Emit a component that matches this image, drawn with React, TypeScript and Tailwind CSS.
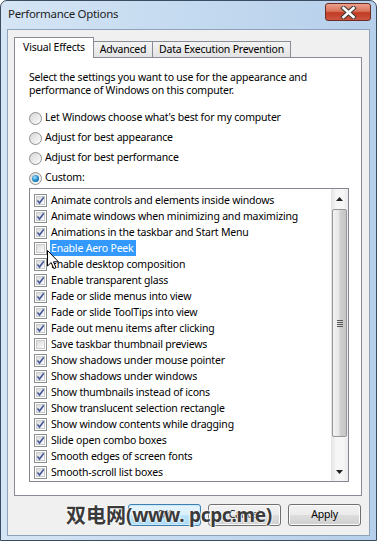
import React from 'react';

const items: { label: string; checked: boolean; selected?: boolean }[] = [
  { label: 'Animate controls and elements inside windows', checked: true },
  { label: 'Animate windows when minimizing and maximizing', checked: true },
  { label: 'Animations in the taskbar and Start Menu', checked: true },
  { label: 'Enable Aero Peek', checked: false, selected: true },
  { label: 'Enable desktop composition', checked: true },
  { label: 'Enable transparent glass', checked: true },
  { label: 'Fade or slide menus into view', checked: true },
  { label: 'Fade or slide ToolTips into view', checked: true },
  { label: 'Fade out menu items after clicking', checked: true },
  { label: 'Save taskbar thumbnail previews', checked: false },
  { label: 'Show shadows under mouse pointer', checked: true },
  { label: 'Show shadows under windows', checked: true },
  { label: 'Show thumbnails instead of icons', checked: true },
  { label: 'Show translucent selection rectangle', checked: true },
  { label: 'Show window contents while dragging', checked: true },
  { label: 'Slide open combo boxes', checked: true },
  { label: 'Smooth edges of screen fonts', checked: true },
  { label: 'Smooth-scroll list boxes', checked: true },
];

const radios = [
  { label: "Let Windows choose what's best for my computer", on: false },
  { label: 'Adjust for best appearance', on: false },
  { label: 'Adjust for best performance', on: false },
  { label: 'Custom:', on: true },
];

const Checkbox: React.FC<{ checked: boolean }> = ({ checked }) => (
  <span className="w-[13px] h-[13px] shrink-0 border border-[#8e8f8f] bg-white p-[1px]">
    <span className="relative block w-full h-full border border-[#c9cbcd] bg-gradient-to-br from-[#dcdcdc] to-[#fbfbfb]">
      {checked && (
        <svg className="absolute -left-[1px] -top-[1px]" width="9" height="9" viewBox="0 0 9 9">
          <path d="M1.5 4.5 L3.5 7 L7.8 1.2" fill="none" stroke="#4a5f97" strokeWidth="1.7" />
        </svg>
      )}
    </span>
  </span>
);

const Radio: React.FC<{ on: boolean }> = ({ on }) => (
  <span className="w-[13px] h-[13px] shrink-0 rounded-full border border-[#8e8f8f] bg-gradient-to-br from-[#d6d6d6] to-[#fdfdfd] flex items-center justify-center">
    {on && <span className="w-[7px] h-[7px] rounded-full bg-[radial-gradient(circle_at_40%_35%,#9fe3ff,#1b84c4_55%,#0d5b8f)]" />}
  </span>
);

const Button: React.FC<{ label: string; primary?: boolean }> = ({ label, primary }) => (
  <div
    className={
      'w-[73px] h-[22px] rounded-[3px] border flex items-center justify-center text-black ' +
      (primary
        ? 'border-[#3c7fb1] bg-[linear-gradient(to_bottom,#e5f4fc_0%,#d9effb_50%,#bde5fb_51%,#a7d9f5_100%)] shadow-[inset_0_0_0_1px_#cdeafd]'
        : 'border-[#707070] bg-[linear-gradient(to_bottom,#f2f2f2_0%,#ebebeb_50%,#dddddd_51%,#cfcfcf_100%)] shadow-[inset_0_0_0_1px_#fcfcfc]')
    }
  >
    {label}
  </div>
);

export default function App() {
  return (
    <div className="relative w-[377px] h-[541px] font-['Noto_Sans',sans-serif] text-[10.5px] tracking-[-0.2px] text-black select-none">
      <div className="w-full h-full flex flex-col rounded-t-[7px] border border-[#3b4b60] bg-[linear-gradient(to_right,#d5e5f5,#c4daf0_50%,#b6cfea)] px-[6px] pb-[4px]">
        {/* title bar */}
        <div className="relative h-[28px] flex items-center pl-[1px]">
          <span className="text-[11.5px] tracking-[-0.3px] text-[#1e1e1e] -mt-[2px]">Performance Options</span>
          <div className="absolute top-[2px] -right-[1px] w-[46px] h-[18px] rounded-[3px] border border-[#6b2d24] bg-[linear-gradient(to_bottom,#eba08c_0%,#d8735b_45%,#c23a22_55%,#cc5540_100%)] flex items-center justify-center">
            <svg width="17" height="13" viewBox="0 0 17 13">
              <path d="M3.5 2 L13.5 11 M13.5 2 L3.5 11" stroke="#3d3d3d" strokeWidth="4.6" strokeLinecap="square" />
              <path d="M3.5 2 L13.5 11 M13.5 2 L3.5 11" stroke="#ffffff" strokeWidth="2.6" strokeLinecap="square" />
            </svg>
          </div>
        </div>

        {/* client area */}
        <div className="flex-1 flex flex-col border border-[#8ea3bb] bg-[#f0f0f0] pl-[6px] pr-[7px]">
          {/* tabs */}
          <div className="h-[27px] flex items-end">
            <div className="relative z-10 w-[80px] h-[21px] -mb-px border-x border-t border-[#898c95] bg-white flex justify-center pt-[2px]">
              Visual Effects
            </div>
            <div className="w-[60px] h-[16px] -ml-px border-x border-t border-[#898c95] bg-[linear-gradient(to_bottom,#f3f3f3,#e3e3e3)] flex items-center justify-center">
              Advanced
            </div>
            <div className="w-[139px] h-[16px] -ml-px border-x border-t border-[#898c95] bg-[linear-gradient(to_bottom,#f3f3f3,#e3e3e3)] flex items-center justify-center">
              Data Execution Prevention
            </div>
          </div>

          {/* tab page */}
          <div className="w-[348px] h-[439px] border border-[#898c95] bg-white pt-[13px] pl-[14px]">
            <p className="leading-[13px] w-[300px]">
              Select the settings you want to use for the appearance and performance of Windows on this computer.
            </p>
            <div className="mt-[11px] flex flex-col">
              {radios.map((r) => (
                <div key={r.label} className="h-[20px] flex items-center gap-[3px]">
                  <Radio on={r.on} />
                  <span>{r.label}</span>
                </div>
              ))}
            </div>

            {/* list box */}
            <div className="w-[320px] h-[294px] border border-[#828790] flex">
              <div className="flex-1 pt-[3px] pl-[4px]">
                {items.map((it) => (
                  <div key={it.label} className="h-[16px] flex items-center gap-[3px] whitespace-nowrap">
                    <Checkbox checked={it.checked} />
                    <span className={'px-[1px] leading-[16px] ' + (it.selected ? 'bg-[#3399ff] text-white pr-[3px]' : '')}>{it.label}</span>
                  </div>
                ))}
              </div>
              {/* scrollbar */}
              <div className="w-[17px] h-full flex flex-col bg-[linear-gradient(to_right,#e3e3e3,#f6f6f6_30%,#f6f6f6_70%,#ebebeb)]">
                <div className="h-[20px] flex items-center justify-center">
                  <svg width="7" height="4" viewBox="0 0 7 4"><path d="M0 4 L3.5 0 L7 4 Z" fill="#222" /></svg>
                </div>
                <div className="mx-[1px] h-[228px] rounded-[2px] border border-[#979797] bg-[linear-gradient(to_right,#f4f4f4,#e6e6e6_45%,#d0d0d0_55%,#c5c5c5)] flex flex-col items-center justify-center gap-[1px]">
                  <span className="w-[6px] h-px bg-[#555]" />
                  <span className="w-[6px] h-px bg-[#555]" />
                  <span className="w-[6px] h-px bg-[#555]" />
                  <span className="w-[6px] h-px bg-[#555]" />
                </div>
                <div className="flex-1 flex items-end justify-center pb-[7px]">
                  <svg width="7" height="4" viewBox="0 0 7 4"><path d="M0 0 L7 0 L3.5 4 Z" fill="#222" /></svg>
                </div>
              </div>
            </div>
          </div>

          {/* buttons */}
          <div className="mt-[8px] flex justify-end gap-[7px] pr-[1px]">
            <Button label="OK" primary />
            <Button label="Cancel" />
            <Button label="Apply" />
          </div>
        </div>
      </div>

      {/* mouse pointer */}
      <svg className="absolute left-[47px] top-[250px]" width="13" height="20" viewBox="0 0 13 20">
        <path d="M0.5 0.5 L0.5 16 L4.2 12.6 L6.8 18.6 L9 17.6 L6.5 11.8 L11.5 11.8 Z" fill="#fff" stroke="#000" strokeWidth="1" strokeLinejoin="round" />
      </svg>

      {/* watermark */}
      <div className="absolute left-[66px] top-[503px] flex items-center leading-[24px] text-[#3a3a3a] font-bold [text-shadow:0_0_2px_#fff,0_0_2px_#fff,0_0_2px_#fff] tracking-normal">
        <span className="text-[20px] font-['Noto_Sans_CJK_SC',sans-serif]">双电网</span>
        <span className="text-[19px] tracking-[-0.3px] font-['Noto_Sans',sans-serif]">(www. pcpc.me)</span>
      </div>
    </div>
  );
}
